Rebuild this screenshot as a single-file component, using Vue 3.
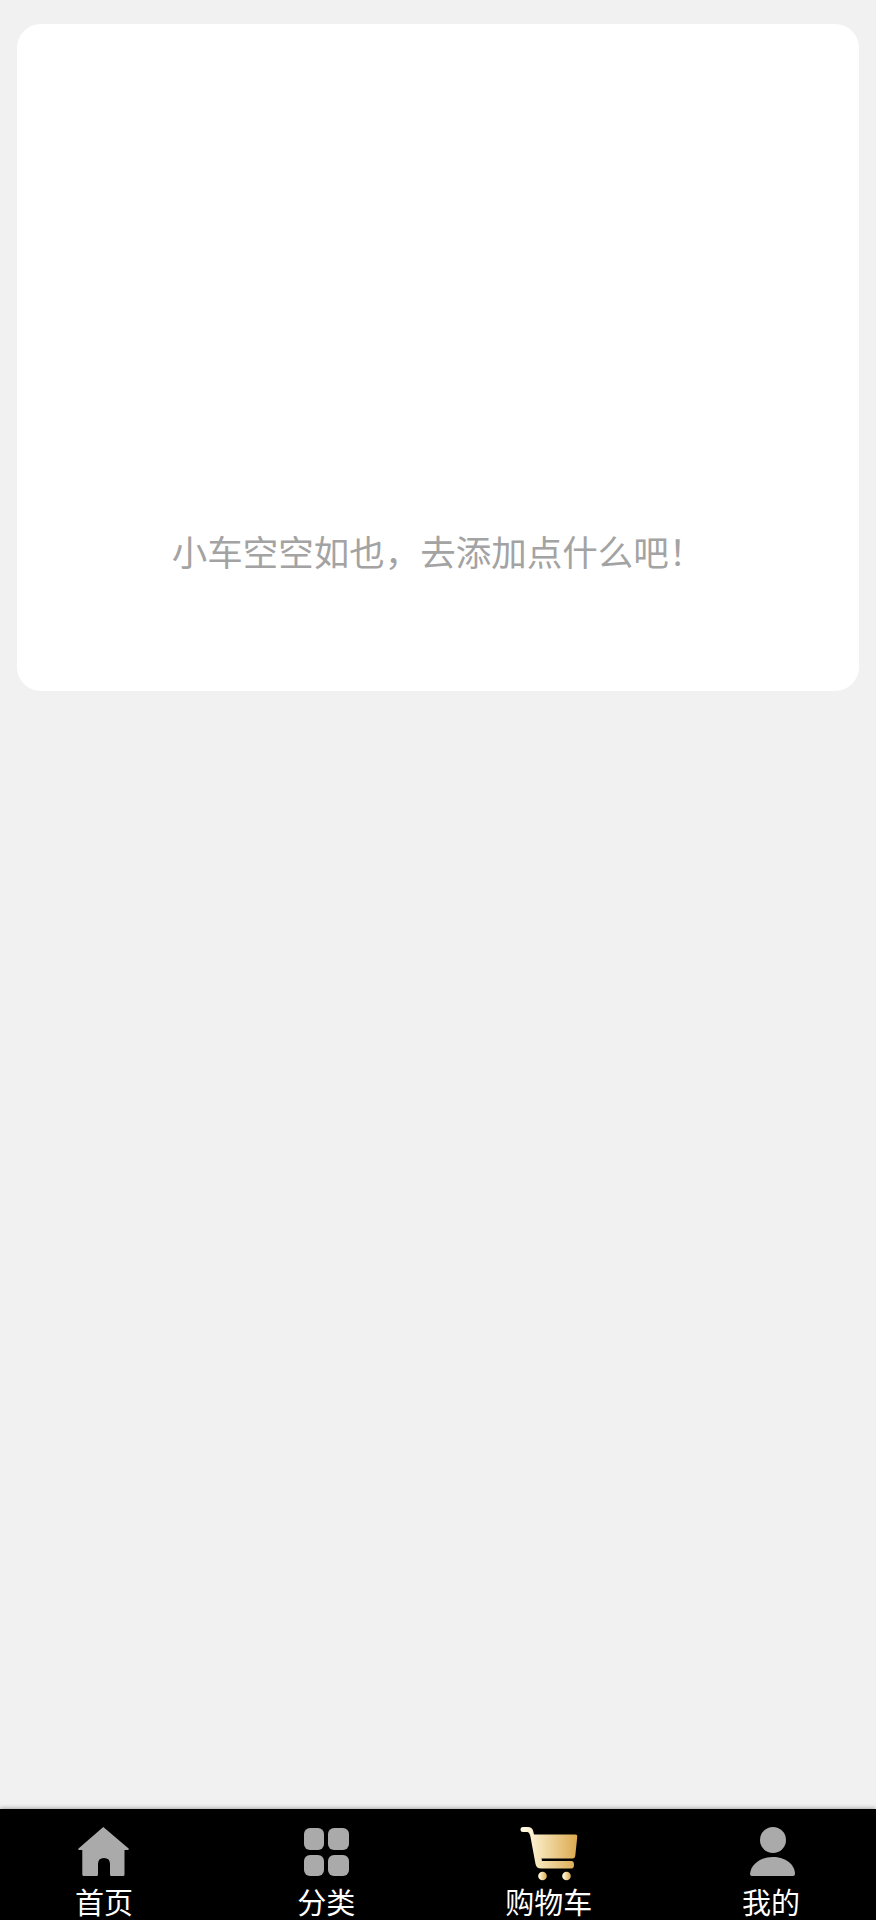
<script setup>
const tabs = [
  { label: '首页', icon: 'home' },
  { label: '分类', icon: 'grid' },
  { label: '购物车', icon: 'cart' },
  { label: '我的', icon: 'user' }
]
</script>

<template>
  <div class="page">
    <main class="content">
      <section class="card">
        <p class="empty">小车空空如也，去添加点什么吧！</p>
      </section>
    </main>
    <nav class="tabbar">
      <div v-for="t in tabs" :key="t.label" class="tab">
        <svg class="icon" viewBox="0 0 60 60" aria-hidden="true">
          <defs v-if="t.icon === 'cart'">
            <linearGradient id="cartGold" x1="0" y1="0" x2="1" y2="0">
              <stop offset="0.1" stop-color="#fff8dc" />
              <stop offset="1" stop-color="#dba94f" />
            </linearGradient>
          </defs>
          <path
            v-if="t.icon === 'home'"
            fill="#aaa"
            d="M29.3 5 L54.6 26.5 Q55.5 28 53.5 28 L50.5 28 L50.5 52.5 Q50.5 54 49 54 L37.5 54 Q36 54 36 52.5 L36 42 Q36 36 30 36 Q24 36 24 42 L24 52.5 Q24 54 22.5 54 L9.8 54 Q8.3 54 8.3 52.5 L8.3 28 L5.5 28 Q3.5 28 4.5 26.5 Z"
          />
          <g v-else-if="t.icon === 'grid'" fill="#aaa">
            <rect x="8" y="6" width="20" height="22" rx="6" />
            <rect x="32" y="6" width="21" height="22" rx="6" />
            <rect x="8" y="33" width="20" height="21" rx="6" />
            <rect x="32" y="33" width="21" height="21" rx="6" />
          </g>
          <g v-else-if="t.icon === 'cart'" fill="url(#cartGold)">
            <path
              d="M4 5 L9 5 Q13 5 14 8.5 L15 12.5 L56.5 12.5 Q58.5 12.5 58.3 14.5 L56.3 33.5 Q56 36.5 53.5 36.5 L22.5 36.5 L23 39 L52.5 39 Q55 39 55 42.7 Q55 46.5 52.5 46.5 L22 46.5 Q17.5 46.5 16.5 42 L11.5 15 Q10.5 10 8 10 L4 10 Q1.5 10 1.5 7.5 Q1.5 5 4 5 Z"
            />
            <circle cx="23.5" cy="54" r="4.3" />
            <circle cx="47.5" cy="54" r="4.3" />
          </g>
          <g v-else fill="#aaa">
            <circle cx="32" cy="18" r="13" />
            <path d="M9 52 C10 42 20 35 32 35 C44 35 54 42 54 52 Q54 54 52 54 L11 54 Q9 54 9 52 Z" />
          </g>
        </svg>
        <span class="label">{{ t.label }}</span>
      </div>
    </nav>
  </div>
</template>

<style>
html,
body {
  margin: 0;
  background: #f1f1f1;
}
</style>

<style scoped>
.page {
  width: 876px;
  height: 1920px;
  display: flex;
  flex-direction: column;
  background: #f1f1f1;
  font-family: "Noto Sans CJK SC", "Liberation Sans", sans-serif;
  overflow: hidden;
}
.content {
  flex: 1;
  padding: 24px 17px 0;
}
.card {
  height: 667px;
  box-sizing: border-box;
  padding-top: 503px;
  background: #fff;
  border-radius: 24px;
}
.empty {
  margin: 0;
  text-align: center;
  font-size: 35.5px;
  line-height: 48px;
  font-weight: 400;
  color: #a3a3a3;
}
.tabbar {
  height: 111px;
  box-sizing: border-box;
  padding: 13px 45px 0 44px;
  display: grid;
  grid-template-columns: repeat(4, 120px);
  justify-content: space-between;
  background: #000;
  box-shadow: 0 -1px 4px rgba(0, 0, 0, 0.3);
}
.tab {
  display: flex;
  flex-direction: column;
  align-items: center;
}
.icon {
  display: block;
  width: 60px;
  height: 60px;
  flex: none;
  filter: blur(0.5px);
}
.label {
  margin-top: 6px;
  font-family: "Liberation Sans", "Noto Sans CJK SC", sans-serif;
  font-size: 29px;
  line-height: 32px;
  color: #fff;
  white-space: nowrap;
}
</style>
